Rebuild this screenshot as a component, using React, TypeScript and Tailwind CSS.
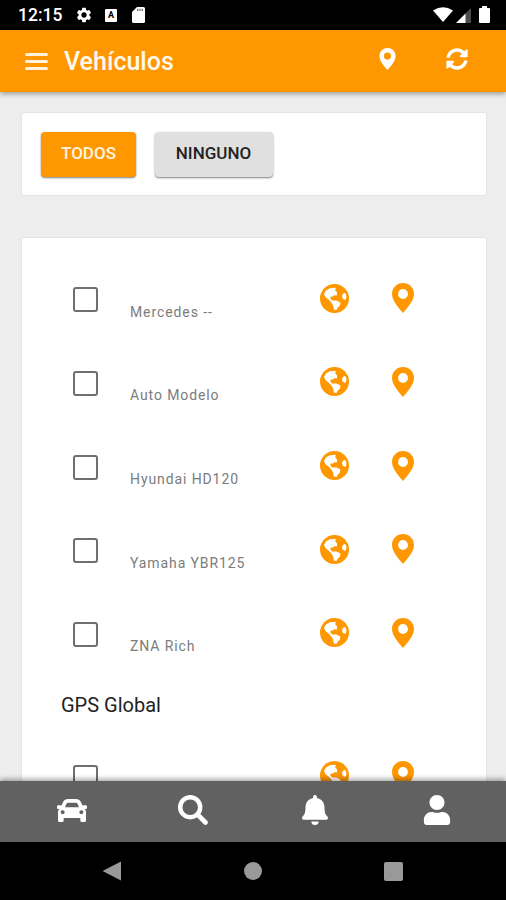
import React from "react";
import { FaSyncAlt, FaUser } from "react-icons/fa";
import { MdSettings } from "react-icons/md";

const vehicles = ["Mercedes --", "Auto Modelo", "Hyundai HD120", "Yamaha YBR125", "ZNA Rich"];

function Globe({ className }: { className: string }) {
  return (
    <svg viewBox="0 0 88 88" className={className}>
      <circle cx="44" cy="44" r="44" fill="currentColor" />
      <path
        fill="#fff"
        d="M12 30L18 20L30 13L48 11L46 19L52 26L51 35L42 34L40 38L33 38L31 43L37 50L50 50L62 56L60 66L54 71L50 79L42 77L40 66L35 57L27 48L17 40Z"
      />
      <path fill="#fff" d="M67 34L72 28L77 27L80 37L79 46L74 48L68 43Z" />
    </svg>
  );
}

function Pin({ className }: { className: string }) {
  return (
    <svg viewBox="0 0 22 30" className={className}>
      <path
        fill="currentColor"
        fillRule="evenodd"
        d="M11 0C4.9 0 0 4.8 0 10.8 0 18.600 7.500 25.500 11 30c3.500-4.500 11-11.400 11-19.200C22 4.800 17.100 0 11 0zm0 6.100a4.900 4.900 0 1 1 0 9.800 4.900 4.900 0 0 1 0-9.800z"
      />
    </svg>
  );
}

function Car() {
  return (
    <svg viewBox="0 0 90 69" className="h-[23px] w-[30px]">
      <path
        fill="currentColor"
        fillRule="evenodd"
        d="M34 0h22c8 0 13 3 16 10l4 9h11c2 0 3 1 3 3v4c0 3-2 4-5 4h-2c3 3 4 6 4 10v24c0 3-1 5-4 5h-9c-3 0-4-2-4-5v-7H20v7c0 3-1 5-4 5H7c-3 0-4-2-4-5V40c0-4 1-7 4-10H5c-3 0-5-1-5-4v-4c0-2 1-3 3-3h11l4-9C21 3 26 0 34 0zm1 11c-4 0-6 1-7 4l-4 10h42l-4-10c-1-3-3-4-7-4zM17 34a6 5.500 0 1 0 0 11 6 5.500 0 0 0 0-11zm56 0a6 5.500 0 1 0 0 11 6 5.500 0 0 0 0-11z"
      />
    </svg>
  );
}

function Search() {
  return (
    <svg viewBox="0 0 30 30" className="mr-[2px] h-[30px] w-[30px]" fill="none" stroke="currentColor">
      <circle cx="12.200" cy="12.200" r="10" strokeWidth="4.400" />
      <path d="M19.500 19.500l8 8" strokeWidth="4.600" strokeLinecap="round" />
    </svg>
  );
}

function Bell() {
  return (
    <svg viewBox="0 0 26 30" className="h-[30px] w-[26px]" fill="currentColor">
      <path d="M13 0c1.100 0 1.900.8 1.900 2v.9c4.700.9 7.600 4.600 7.600 9.400 0 5.200 1 7.500 2.900 9.300 1.200 1.300.4 3.200-1.300 3.200H1.900c-1.700 0-2.500-1.900-1.300-3.200 1.900-1.800 2.900-4.100 2.900-9.300 0-4.800 2.900-8.500 7.600-9.400V2c0-1.200.8-2 1.900-2zM9.300 26.400h7.400c0 2.200-1.600 3.600-3.700 3.600s-3.700-1.400-3.700-3.600z" />
    </svg>
  );
}

function Row({ label }: { label: string }) {
  return (
    <div className="flex h-[83.65px] shrink-0 items-center pl-[51px]">
      <span className="h-[25px] w-[25px] shrink-0 rounded-[3px] border-2 border-[#6f6f6f]" />
      <span className="ml-[32px] w-[190px] pt-[24px] text-[14px] leading-5 tracking-[0.9px] text-[#7c7c7c]">{label}</span>
      <Globe className="mb-[3px] h-[29px] w-[29px] shrink-0 text-[#ff9800]" />
      <Pin className="mb-[3px] ml-[43px] h-[30px] w-[22px] shrink-0 text-[#ff9800]" />
    </div>
  );
}

export default function App() {
  return (
    <div className="flex h-[900px] w-[506px] flex-col overflow-hidden bg-[#ededed] font-['Roboto',sans-serif]">
      <div className="flex h-[30px] shrink-0 items-center bg-black text-white">
        <span className="ml-[18px] w-[57px] pt-px text-[17.5px] font-medium">12:15</span>
        <MdSettings className="h-[18px] w-[18px]" />
        <span className="ml-[12px] flex h-[13px] w-[12px] items-center justify-center rounded-[1px] bg-white text-[9px] font-bold leading-none text-black">A</span>
        <svg viewBox="0 0 13 16" className="ml-[15px] h-[16px] w-[13px]">
          <path fill="#fff" d="M5 0h6.500Q13 0 13 1.500v13q0 1.500-1.500 1.500h-10Q0 16 0 14.500V5z" />
          <path stroke="#666" strokeWidth="1.200" d="M5.700 1.800v2.300M8 1.800v2.300M10.300 1.800v2.300" />
        </svg>
        <svg viewBox="0 0 20 15" className="mb-px ml-auto h-[15px] w-[20px]">
          <path fill="#fff" d="M0 3.500Q10-3 20 3.500L10 15z" />
        </svg>
        <svg viewBox="0 0 15 15" className="ml-[3px] h-[15px] w-[15px]">
          <path fill="#4d4d4d" d="M15 0v15H9V6z" />
          <path fill="#fff" d="M9.500 5.500V15H0z" />
        </svg>
        <svg viewBox="0 0 11 17" className="mb-px ml-[8px] mr-[16px] h-[17px] w-[11px]">
          <path fill="#fff" d="M3 0h5v2h2q1 0 1 1v13q0 1-1 1H1q-1 0-1-1V3q0-1 1-1h2z" />
        </svg>
      </div>
      <header className="z-10 flex h-[62px] shrink-0 items-center bg-[#ff9800] text-white shadow-[0_2px_5px_rgba(0,0,0,0.35)]">
        <div className="ml-[25px] flex w-[23px] flex-col gap-[4px]">
          <span className="h-[3px] rounded-full bg-[#fff3e0]" />
          <span className="h-[3px] rounded-full bg-[#fff3e0]" />
          <span className="h-[3px] rounded-full bg-[#fff3e0]" />
        </div>
        <h1 className="ml-[16px] w-[315px] pt-px text-[25px] font-medium text-[#fff8ee]">Vehículos</h1>
        <Pin className="mb-[4px] h-[22px] w-[17px]" />
        <FaSyncAlt className="mb-[4px] ml-[50px] h-[22px] w-[22px]" />
      </header>
      <main className="flex min-h-0 flex-1 flex-col overflow-hidden pl-[21px] pr-[19px] pt-[20px]">
        <section className="flex h-[84px] shrink-0 gap-[19px] rounded-[3px] border border-[#e4e4e4] bg-white px-[19px] pt-[19px]">
          <button className="h-[45px] w-[95px] rounded-[4px] bg-[#ff9800] pb-[2px] text-[17px] font-medium text-[#fff3e0] shadow-[0_1px_2px_rgba(0,0,0,0.5)]">TODOS</button>
          <button className="h-[45px] w-[118px] rounded-[4px] bg-[#e0e0e0] pb-[2px] pr-px text-[17px] font-medium text-[#222] shadow-[0_1px_2px_rgba(0,0,0,0.5)]">NINGUNO</button>
        </section>
        <section className="mt-[41px] flex h-[700px] shrink-0 flex-col rounded-[3px] border border-[#e4e4e4] bg-white pt-[20px]">
          {vehicles.map((v) => (
            <Row key={v} label={v} />
          ))}
          <h2 className="flex h-[57px] shrink-0 items-center pl-[39px] text-[20px] text-[#222]">GPS Global</h2>
          <div className="pt-[2px]">
            <Row label="" />
          </div>
        </section>
      </main>
      <nav className="z-10 grid h-[61px] shrink-0 grid-cols-4 place-items-center bg-[#616161] pb-[3px] pl-[11px] pr-[8px] text-white shadow-[0_-2px_5px_rgba(0,0,0,0.35)]">
        <Car />
        <Search />
        <Bell />
        <FaUser className="h-[30px] w-[30px]" />
      </nav>
      <div className="flex h-[58px] shrink-0 items-center bg-black text-[#999]">
        <svg viewBox="0 0 18 20" className="ml-[103px] h-[20px] w-[18px]">
          <path fill="currentColor" d="M18 .5v19L.5 10.600q-.8-.6 0-1.200z" />
        </svg>
        <span className="ml-[123px] h-[18px] w-[18px] rounded-full bg-[#999]" />
        <span className="ml-[122px] h-[19px] w-[19px] rounded-[2px] bg-[#999]" />
      </div>
    </div>
  );
}
